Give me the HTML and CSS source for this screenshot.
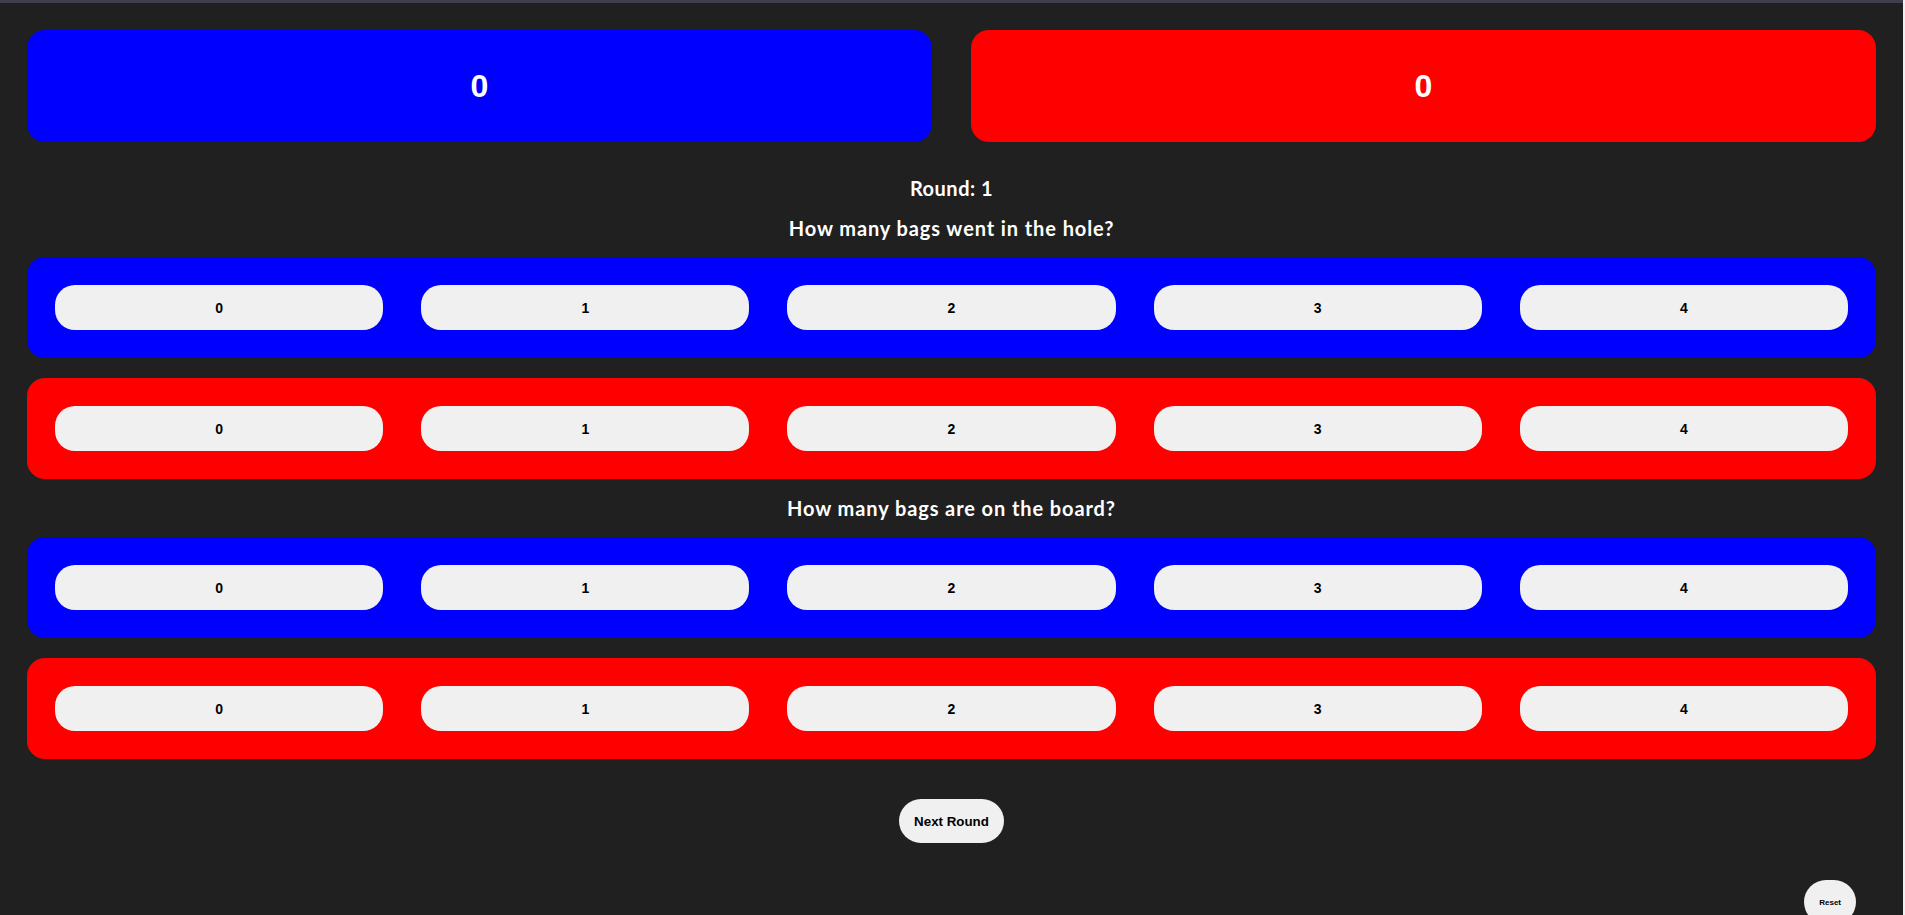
FILE: index.html
```html
<!DOCTYPE html>
<html lang="en">
<head>
<meta charset="utf-8">
<title>Cornhole Scorer</title>
<link rel="stylesheet" href="styles.css">
</head>
<body>
<div class="page">
  <div class="scores">
    <div class="score blue">0</div>
    <div class="score red">0</div>
  </div>
  <div class="round">Round: 1</div>
  <div class="question q1">How many bags went in the hole?</div>
  <div class="row blue">
    <button class="pick">0</button><button class="pick">1</button><button class="pick">2</button><button class="pick">3</button><button class="pick">4</button>
  </div>
  <div class="row red">
    <button class="pick">0</button><button class="pick">1</button><button class="pick">2</button><button class="pick">3</button><button class="pick">4</button>
  </div>
  <div class="question q2">How many bags are on the board?</div>
  <div class="row blue">
    <button class="pick">0</button><button class="pick">1</button><button class="pick">2</button><button class="pick">3</button><button class="pick">4</button>
  </div>
  <div class="row red">
    <button class="pick">0</button><button class="pick">1</button><button class="pick">2</button><button class="pick">3</button><button class="pick">4</button>
  </div>
  <div class="next-wrap"><button class="next">Next Round</button></div>
  <div class="reset-wrap"><button class="reset">Reset</button></div>
</div>
</body>
</html>
```

FILE: styles.css
```css
html {
  background: #f0f0f0;
  margin: 0;
  padding: 0;
}
body {
  margin: 0 2px 0 0;
  background: #202020;
  border-top: 3px solid #3f3d4e;
  min-height: 912px;
  overflow: hidden;
  font-family: "Liberation Sans", Arial, sans-serif;
}
.page {
  padding: 27px 27px 0 27px;
  height: 885px;
  overflow: hidden;
}
.scores {
  display: flex;
  gap: 39px;
}
.score {
  flex: 1;
  height: 112px;
  border-radius: 18px;
  color: #fff;
  font-weight: bold;
  font-size: 32px;
  display: flex;
  align-items: center;
  justify-content: center;
}
.blue { background: #0000ff; }
.red { background: #ff0000; }
.round, .question {
  text-align: center;
  color: #fff;
  font-family: "Lato", "Liberation Sans", sans-serif;
  font-weight: 700;
  font-size: 20px;
  line-height: 24px;
  letter-spacing: 0.9px;
}
.round { margin-top: 34px; letter-spacing: 0.5px; }
.q1 { margin-top: 16px; margin-bottom: 17px; }
.q2 { margin-top: 17px; margin-bottom: 17px; }
.row {
  display: flex;
  gap: 38px;
  padding: 28px;
  border-radius: 18px;
}
.row + .row { margin-top: 20px; }
.pick {
  flex: 1;
  height: 45px;
  border: none;
  border-radius: 20px;
  background: #f0f0f0;
  color: #000;
  font-family: "Liberation Sans", Arial, sans-serif;
  font-weight: bold;
  font-size: 14px;
  padding: 0;
}
.next-wrap {
  display: flex;
  justify-content: center;
  margin-top: 40px;
}
.next {
  border: none;
  background: #f0f0f0;
  color: #000;
  border-radius: 22px;
  height: 44px;
  padding: 0 15px;
  font-family: "Liberation Sans", Arial, sans-serif;
  font-weight: bold;
  font-size: 13.33px;
}
.reset-wrap {
  display: flex;
  justify-content: flex-end;
  margin-top: 37px;
  padding-right: 20px;
}
.reset {
  border: none;
  background: #f0f0f0;
  color: #000;
  border-radius: 22px;
  height: 44px;
  padding: 0 15px;
  font-family: "Liberation Sans", Arial, sans-serif;
  font-weight: bold;
  font-size: 8px;
}
```
